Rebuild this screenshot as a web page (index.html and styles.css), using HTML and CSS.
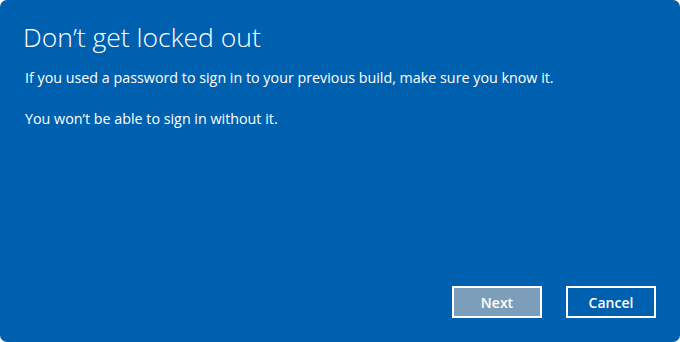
FILE: index.html
```html
<!DOCTYPE html>
<html lang="en">
<head>
    <meta charset="UTF-8">
    <title>Don't get locked out</title>
    <link rel="stylesheet" href="styles.css">
</head>
<body>
    <div class="dialog">
        <h1 class="title">Don’t get locked out</h1>
        <p class="text">If you used a password to sign in to your previous build, make sure you know it.</p>
        <p class="text">You won’t be able to sign in without it.</p>
        <div class="buttons">
            <button class="btn btn-next" disabled>Next</button>
            <button class="btn">Cancel</button>
        </div>
    </div>
</body>
</html>
```

FILE: styles.css
```css
html, body {
    margin: 0;
    padding: 0;
    background: #ffffff;
}
body {
    font-family: "Open Sans", "Noto Sans", sans-serif;
    color: #ffffff;
}
.dialog {
    box-sizing: border-box;
    height: 342px;
    background-color: #0060b0;
    border-radius: 7px;
    padding: 20px 24px 24px 25px;
    display: flex;
    flex-direction: column;
}
.title {
    margin: 0 0 0 -2px;
    font-size: 26.5px;
    font-weight: 300;
    line-height: 34px;
}
.text {
    margin: 14px 0 0 0;
    font-size: 14.3px;
    line-height: 20px;
}
.text + .text {
    margin-top: 21px;
}
.buttons {
    margin-top: auto;
    display: flex;
    justify-content: flex-end;
    gap: 24px;
}
.btn {
    width: 90px;
    height: 32px;
    border: 2px solid #ffffff;
    background-color: #0060b0;
    color: #ffffff;
    font-family: inherit;
    font-size: 14px;
    font-weight: 600;
    padding: 0;
}
.btn-next {
    background-color: #7d9eba;
}
```
